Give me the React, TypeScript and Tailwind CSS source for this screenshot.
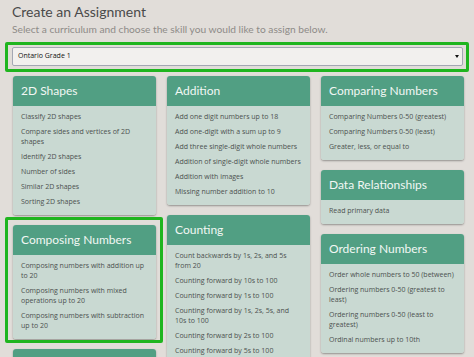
import React from "react";

type Card = { title: string; items: string[]; highlight?: boolean };

const columns: Card[][] = [
  [
    {
      title: "2D Shapes",
      items: [
        "Classify 2D shapes",
        "Compare sides and vertices of 2D shapes",
        "Identify 2D shapes",
        "Number of sides",
        "Similar 2D shapes",
        "Sorting 2D shapes",
      ],
    },
    {
      title: "Composing Numbers",
      highlight: true,
      items: [
        "Composing numbers with addition up to 20",
        "Composing numbers with mixed operations up to 20",
        "Composing numbers with subtraction up to 20",
      ],
    },
    // only the top of this header shows in the shot
    { title: "", items: [] },
  ],
  [
    {
      title: "Addition",
      items: [
        "Add one digit numbers up to 18",
        "Add one-digit with a sum up to 9",
        "Add three single-digit whole numbers",
        "Addition of single-digit whole numbers",
        "Addition with images",
        "Missing number addition to 10",
      ],
    },
    {
      title: "Counting",
      items: [
        "Count backwards by 1s, 2s, and 5s from 20",
        "Counting forward by 10s to 100",
        "Counting forward by 1s to 100",
        "Counting forward by 1s, 2s, 5s, and 10s to 100",
        "Counting forward by 2s to 100",
        "Counting forward by 5s to 100",
      ],
    },
  ],
  [
    {
      title: "Comparing Numbers",
      items: [
        "Comparing Numbers 0-50 (greatest)",
        "Comparing Numbers 0-50 (least)",
        "Greater, less, or equal to",
      ],
    },
    { title: "Data Relationships", items: ["Read primary data"] },
    {
      title: "Ordering Numbers",
      items: [
        "Order whole numbers to 50 (between)",
        "Ordering numbers 0-50 (greatest to least)",
        "Ordering numbers 0-50 (least to greatest)",
        "Ordinal numbers up to 10th",
      ],
    },
  ],
];

function SkillCard({ card }: { card: Card }) {
  return (
    <div className="relative">
      <div className="rounded-[3px] overflow-hidden shadow-[0_1px_2px_rgba(0,0,0,0.35)]">
        <div className="h-[30px] flex items-center px-2 bg-[#519f83] text-[12px] text-[#f2f7f4]">
          {card.title}
        </div>
        <div className="bg-[#c9d9d2] px-2 pt-[6px] pb-[8px] flex flex-col gap-[5px] font-['Open_Sans',sans-serif] text-[7px] leading-[10px] text-[#4c514f]">
          {card.items.map((item) => (
            <div key={item}>{item}</div>
          ))}
        </div>
      </div>
      {card.highlight && (
        <div className="absolute -left-[8px] -top-[8px] -right-[7px] -bottom-[4px] border-[3.5px] border-[#1fb51f] rounded-[2px]" />
      )}
    </div>
  );
}

export default function App() {
  return (
    <div className="w-[474px] h-[357px] overflow-hidden bg-[#e1ddd9] font-['Lato',sans-serif]">
      <div className="pl-3 pt-[2px]">
        <h1 className="text-[14px] leading-[20px] text-[#4a4a4a]">Create an Assignment</h1>
        <p className="text-[10.2px] leading-[14px] text-[#8e8b88]">
          Select a curriculum and choose the skill you would like to assign below.
        </p>
      </div>
      <div className="mx-[5px] mt-[6px] h-[30px] border-[3px] border-[#1fb51f] rounded-[2px] pl-[4px] pr-[3px] pt-[2px] pb-[3px]">
        <div className="h-full flex items-center justify-between bg-[#f2f0ee] border border-[#a3a7b3] rounded-[2px] pl-[5px] pr-[3px] font-['Open_Sans',sans-serif] text-[7px] text-[#111]">
          <span>Ontario Grade 1</span>
          <svg width="4" height="3" viewBox="0 0 4 3">
            <path d="M0 0 L4 0 L2 3 Z" fill="#111" />
          </svg>
        </div>
      </div>
      <div className="flex gap-[11px] pl-[13px] mt-[4px]">
        {columns.map((col, i) => (
          <div key={i} className="w-[143px] flex flex-col gap-[10px]">
            {col.map((card, j) => (
              <SkillCard key={j} card={card} />
            ))}
          </div>
        ))}
      </div>
    </div>
  );
}
